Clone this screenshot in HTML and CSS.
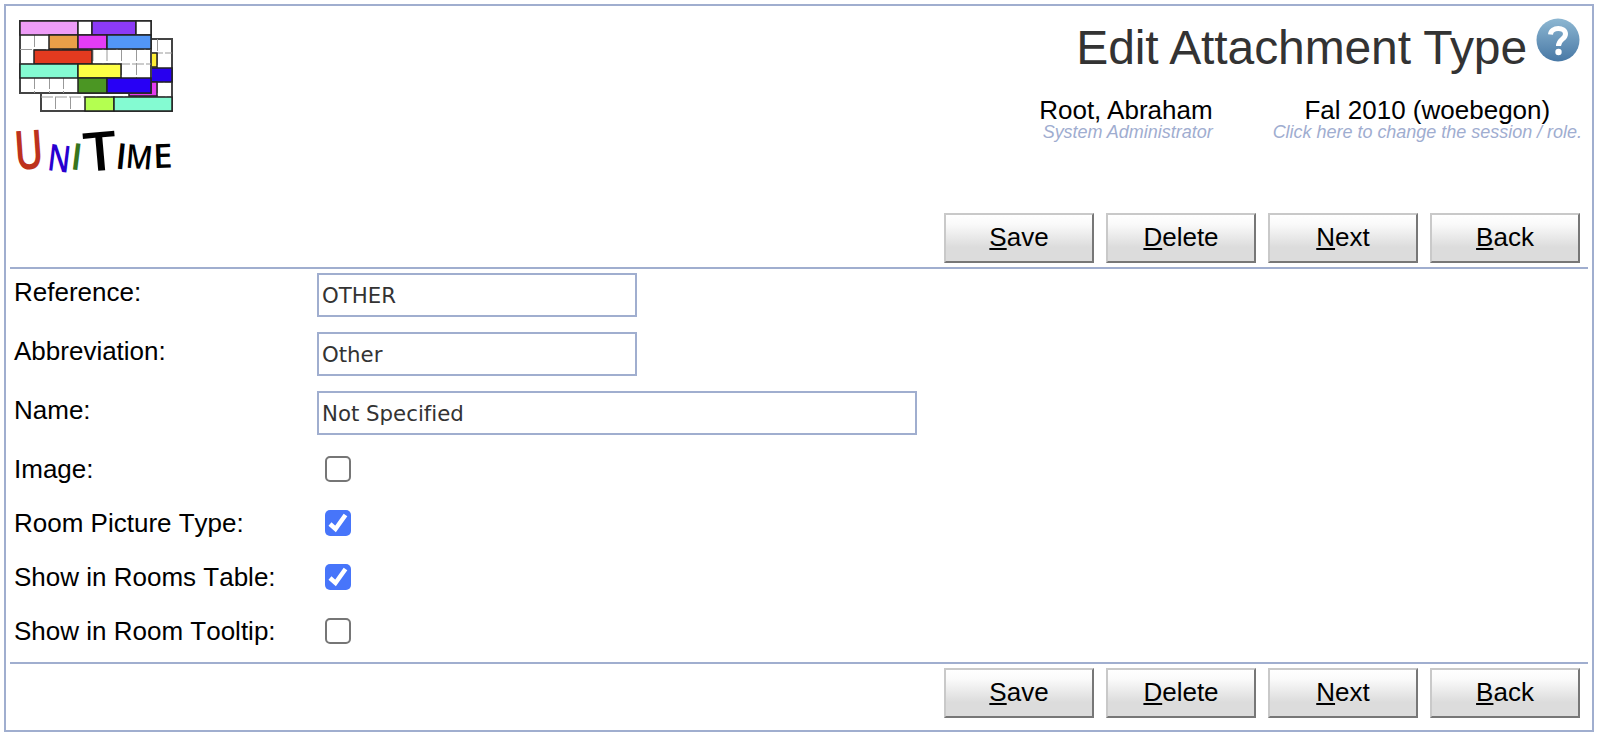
FILE: index.html
```html
<!DOCTYPE html>
<html lang="en">
<head>
<meta charset="utf-8">
<title>Edit Attachment Type</title>
<link rel="stylesheet" href="styles.css">
</head>
<body>
<main class="frame">
  <header class="header">
    <svg class="logo" width="164" height="180" viewBox="14 14 164 180" role="img" aria-label="UniTime">
      <g class="cells">
        <rect x="41" y="39" width="131" height="72" class="grid-box"/>
        <path d="M55.500 97v14M70.500 97v14M157.500 39v58M41 97H172M151 53H172M151 82H172" class="dash"/>
        <rect x="143" y="53" width="14" height="14" fill="#ffee35"/>
        <rect x="143" y="68" width="29" height="14" fill="#2800ee"/>
        <rect x="129" y="82" width="28" height="14" fill="#e43cf0"/>
        <rect x="85" y="97" width="29" height="14" fill="#b4ff50"/>
        <rect x="114" y="97" width="58" height="14" fill="#84fbd2"/>
        <rect x="20" y="21" width="131" height="72" class="grid-box"/>
        <path d="M34.500 35v58M49.500 35v58M63.500 35v58M93 49v29M107 49v29M121.500 49v29M136.500 49v29M20 49.500H151M20 64H151" class="dash"/>
        <rect x="20" y="21" width="58" height="14" fill="#ee9cf7"/>
        <rect x="78" y="21" width="14" height="14" fill="#fff"/>
        <rect x="92" y="21" width="44" height="14" fill="#8c3af6"/>
        <rect x="136" y="21" width="15" height="14" fill="#fff"/>
        <rect x="49" y="35" width="29" height="14" fill="#e99f48"/>
        <rect x="78" y="35" width="29" height="14" fill="#e43cf5"/>
        <rect x="107" y="35" width="44" height="14" fill="#5296f6"/>
        <rect x="34" y="50" width="58" height="14" fill="#e33a1f"/>
        <rect x="20" y="64" width="58" height="14" fill="#84fbd2"/>
        <rect x="78" y="64" width="43" height="14" fill="#feff45"/>
        <rect x="78" y="78" width="29" height="15" fill="#4b9623"/>
        <rect x="107" y="78" width="44" height="15" fill="#2800f5"/>
      </g>
      <g class="wordmark">
        <text transform="translate(15.500 170) rotate(-4) scale(.73 1)" font-size="54" fill="#bd321d">U</text>
        <text transform="translate(46.500 170) rotate(7) scale(.78 1)" font-size="37" fill="#2800d0">N</text>
        <text transform="translate(69.500 169) rotate(7)" font-size="37" fill="#37751d">I</text>
        <text transform="translate(85 172) rotate(-5) scale(1.100 1)" font-size="54">T</text>
        <text transform="translate(114.500 168.500) rotate(6)" font-size="36">I</text>
        <text transform="translate(125 167.500) rotate(5) scale(.88 1)" font-size="33">M</text>
        <text transform="translate(153.500 168) rotate(-2) scale(1.050 1)" font-size="33">E</text>
      </g>
    </svg>
    <div class="heading">
      <div class="title-row">
        <h1 class="title">Edit Attachment Type</h1>
        <svg class="help" width="44" height="46" viewBox="0 0 44 46" role="img" aria-label="Help">
          <defs><linearGradient id="help-fill" x1="0" y1="0" x2="0" y2="1"><stop offset="0" stop-color="#8db7d2"/><stop offset="1" stop-color="#4878a5"/></linearGradient></defs>
          <circle cx="22" cy="23" r="21.500" fill="url(#help-fill)"/>
          <path d="M14.500 17.500C15 9.500 29.500 9.500 29.500 17C29.500 22.500 22.500 22 22.500 29" fill="none" stroke="#fff" stroke-width="5"/>
          <circle cx="22.500" cy="35" r="3.200" fill="#fff"/>
        </svg>
      </div>
      <div class="session-row">
        <div class="info user"><span class="info-main">Root, Abraham</span><span class="info-sub">System Administrator</span></div>
        <div class="info session"><span class="info-main">Fal 2010 (woebegon)</span><span class="info-sub">Click here to change the session / role.</span></div>
      </div>
    </div>
  </header>
  <div class="actions">
    <button class="btn"><u>S</u>ave</button>
    <button class="btn"><u>D</u>elete</button>
    <button class="btn"><u>N</u>ext</button>
    <button class="btn"><u>B</u>ack</button>
  </div>
  <form class="form">
    <label class="row"><span class="label">Reference:</span><input class="field" type="text" value="OTHER"></label>
    <label class="row"><span class="label">Abbreviation:</span><input class="field" type="text" value="Other"></label>
    <label class="row"><span class="label">Name:</span><input class="field wide" type="text" value="Not Specified"></label>
    <label class="row short"><span class="label">Image:</span><span class="check"></span></label>
    <label class="row short"><span class="label">Room Picture Type:</span><span class="check checked"><svg width="26" height="26" viewBox="0 0 26 26"><path d="M5 14L10.500 19L20.500 5" class="tick"/></svg></span></label>
    <label class="row short"><span class="label">Show in Rooms Table:</span><span class="check checked"><svg width="26" height="26" viewBox="0 0 26 26"><path d="M5 14L10.500 19L20.500 5" class="tick"/></svg></span></label>
    <label class="row short"><span class="label">Show in Room Tooltip:</span><span class="check"></span></label>
  </form>
  <div class="actions">
    <button class="btn"><u>S</u>ave</button>
    <button class="btn"><u>D</u>elete</button>
    <button class="btn"><u>N</u>ext</button>
    <button class="btn"><u>B</u>ack</button>
  </div>
</main>
</body>
</html>
```
FILE: styles.css
```css
* { box-sizing: border-box; }
body {
  margin: 0;
  padding: 4px;
  background: #fff;
  color: #000;
  font-family: "Liberation Sans", Arial, sans-serif;
  font-size: 26px;
}
.frame {
  width: 1590px;
  height: 728px;
  border: 2px solid #a0aecf;
  padding: 0 4px;
}
.header {
  display: flex;
  justify-content: space-between;
  height: 207px;
  padding: 8px 6px 0 4px;
}
.logo { flex: none; overflow: visible; }
.cells rect { stroke: #222; stroke-width: 1.5; }
.cells .grid-box { fill: #fff; stroke: #444; stroke-width: 2; }
.dash { fill: none; stroke: #999; stroke-width: 1; stroke-dasharray: 12 2; }
.wordmark { font-family: "Open Sans", sans-serif; font-weight: 600; }
.heading { display: flex; flex-direction: column; align-items: flex-end; }
.title-row { display: flex; gap: 9px; padding: 3px 2px 0 0; height: 78px; }
.title {
  margin: 4px 0 0;
  color: #333;
  font-size: 48px;
  font-weight: 400;
  letter-spacing: -0.1px;
  line-height: 54px;
  white-space: nowrap;
}
.session-row { display: flex; gap: 60px; }
.info { display: flex; flex-direction: column; white-space: nowrap; }
.user { align-items: flex-end; }
.session { align-items: center; }
.info-main { line-height: 26px; margin-top: 5px; }
.info-sub { color: #9fadd0; font-size: 18px; font-style: italic; letter-spacing: -0.02px; line-height: 18px; }
.actions {
  display: flex;
  justify-content: flex-end;
  gap: 12px;
  padding: 0 8px 4px 0;
}
.btn {
  width: 150px;
  height: 50px;
  padding: 0 0 1px;
  border: 2px solid;
  border-color: #c9c9c9 #777 #777 #c9c9c9;
  background: linear-gradient(#fff 0%, #fafafa 20%, #dcdcdc 70%, #dcdcdc 100%);
  color: #000;
  font: 26px "Liberation Sans", Arial, sans-serif;
}
.btn u { text-decoration-thickness: 2px; text-underline-offset: 2px; }
.form {
  height: 397px;
  margin-bottom: 4px;
  padding: 4px 0 0 4px;
  border: solid #a0aecf;
  border-width: 2px 0;
}
.row { display: flex; height: 59px; }
.short { height: 54px; }
.label { width: 303px; line-height: 38px; font-kerning: none; }
.field {
  width: 320px;
  height: 44px;
  padding: 0 3px;
  border: 2px solid #a0aecf;
  background: #fff;
  color: #333;
  font: 21.3px "DejaVu Sans", Verdana, sans-serif;
  font-variant-ligatures: none;
}
.wide { width: 600px; }
.check {
  width: 26px;
  height: 26px;
  margin: 6px 0 0 8px;
  border: 2px solid #767676;
  border-radius: 5px;
}
.checked { border: 0; background: #4775fa; }
.checked svg { display: block; }
.tick { fill: none; stroke: #fff; stroke-width: 4.5; }
```
